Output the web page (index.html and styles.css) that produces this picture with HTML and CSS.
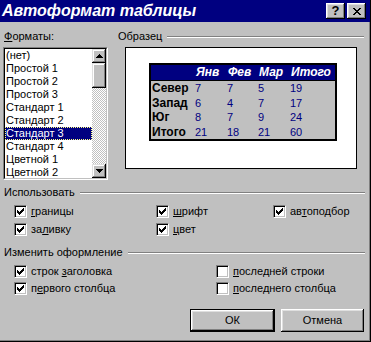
FILE: index.html
```html
<!DOCTYPE html>
<html lang="ru">
<head>
<meta charset="utf-8">
<title>Автоформат таблицы</title>
<link rel="stylesheet" href="styles.css">
</head>
<body>
<div class="win">
  <div class="titlebar">
    <span class="title">Автоформат таблицы</span>
    <div class="capbtns">
      <div class="capbtn help">?</div>
      <div class="capbtn">
        <svg width="8" height="7" viewBox="0 0 8 7" shape-rendering="crispEdges"><path d="M0 0h2v1H0zM6 0h2v1H6zM1 1h2v1H1zM5 1h2v1H5zM2 2h4v1H2zM3 3h2v1H3zM2 4h4v1H2zM1 5h2v1H1zM5 5h2v1H5zM0 6h2v1H0zM6 6h2v1H6z" fill="#000"/></svg>
      </div>
    </div>
  </div>
  <div class="body">
    <div class="top">
      <div class="formats">
        <div class="lbl"><u>Ф</u>орматы:</div>
        <div class="listbox">
          <div class="listin">
            <ul class="items">
              <li>(нет)</li>
              <li>Простой 1</li>
              <li>Простой 2</li>
              <li>Простой 3</li>
              <li>Стандарт 1</li>
              <li>Стандарт 2</li>
              <li class="sel">Стандарт 3</li>
              <li>Стандарт 4</li>
              <li>Цветной 1</li>
              <li>Цветной 2</li>
            </ul>
            <div class="vsb">
              <div class="sbtn"><svg width="7" height="4" viewBox="0 0 7 4" shape-rendering="crispEdges"><path d="M3 0h1v1H3zM2 1h3v1H2zM1 2h5v1H1zM0 3h7v1H0z" fill="#000"/></svg></div>
              <div class="thumb"></div>
              <div class="track"></div>
              <div class="sbtn"><svg width="7" height="4" viewBox="0 0 7 4" shape-rendering="crispEdges"><path d="M0 0h7v1H0zM1 1h5v1H1zM2 2h3v1H2zM3 3h1v1H3z" fill="#000"/></svg></div>
            </div>
          </div>
        </div>
      </div>
      <div class="sample">
        <div class="sep"><span>Образец</span><i class="line"></i></div>
        <div class="preview">
          <div class="tbl">
            <div class="hrow">
              <span></span><span>Янв</span><span>Фев</span><span>Мар</span><span>Итого</span>
            </div>
            <div class="row"><b>Север</b><span>7</span><span>7</span><span>5</span><span>19</span></div>
            <div class="row"><b>Запад</b><span>6</span><span>4</span><span>7</span><span>17</span></div>
            <div class="row"><b>Юг</b><span>8</span><span>7</span><span>9</span><span>24</span></div>
            <div class="row"><b>Итого</b><span>21</span><span>18</span><span>21</span><span>60</span></div>
          </div>
        </div>
      </div>
    </div>

    <div class="sep sep-use"><span>Использовать</span><i class="line"></i></div>
    <div class="checks3">
      <label class="cb"><span class="box on"></span><span><u>г</u>раницы</span></label>
      <label class="cb"><span class="box on"></span><span><u>ш</u>рифт</span></label>
      <label class="cb"><span class="box on"></span><span>ав<u>т</u>оподбор</span></label>
      <label class="cb"><span class="box on"></span><span>за<u>л</u>ивку</span></label>
      <label class="cb"><span class="box on"></span><span><u>ц</u>вет</span></label>
    </div>

    <div class="sep sep-mod"><span>Изменить оформление</span><i class="line"></i></div>
    <div class="checks2">
      <label class="cb"><span class="box on"></span><span>строк <u>з</u>аголовка</span></label>
      <label class="cb"><span class="box"></span><span><u>п</u>оследней строки</span></label>
      <label class="cb"><span class="box on"></span><span>п<u>е</u>рвого столбца</span></label>
      <label class="cb"><span class="box"></span><span><u>п</u>оследнего столбца</span></label>
    </div>

    <div class="buttons">
      <div class="btn default"><div class="btn-in">ОК</div></div>
      <div class="btn"><div class="btn-in">Отмена</div></div>
    </div>
  </div>
</div>
</body>
</html>
```

FILE: styles.css
```css
* { box-sizing: border-box; margin: 0; padding: 0; }
html, body { width: 371px; height: 342px; overflow: hidden; }
body {
  background: #c0c0c0;
  font: 11px/13px "Liberation Sans", Arial, sans-serif;
  color: #000;
}
u { text-decoration: underline; text-underline-offset: 1px; }

.win {
  width: 371px;
  height: 342px;
  display: flex;
  flex-direction: column;
  border-right: 1px solid #000;
  border-bottom: 1px solid #000;
  box-shadow: inset -1px -1px 0 #808080;
}

.titlebar {
  height: 22px;
  flex: none;
  background: #000080;
  display: flex;
  align-items: center;
  justify-content: space-between;
  padding: 0 4px 0 2px;
}
.title {
  color: #fff;
  font: italic bold 16px/22px "Liberation Sans", Arial, sans-serif;
  letter-spacing: 0;
  white-space: nowrap;
}
.capbtns { display: flex; gap: 2px; }
.capbtn {
  width: 19px;
  height: 16px;
  background: #c0c0c0;
  box-shadow: inset -1px -1px 0 #000, inset 1px 1px 0 #fff, inset -2px -2px 0 #808080, inset 2px 2px 0 #dfdfdf;
  display: flex;
  align-items: center;
  justify-content: center;
}
.capbtn.help { font: bold 13px/16px "Liberation Sans", Arial, sans-serif; }

.body {
  flex: 1;
  display: flex;
  flex-direction: column;
  padding: 8px 5px 9px 3px;
}

.top { display: flex; height: 150px; flex: none; }
.formats { width: 105px; flex: none; }
.lbl { padding-left: 1px; height: 13px; margin-bottom: 4px; }

.listbox {
  width: 105px;
  height: 133px;
  background: #fff;
  border: 1px solid;
  border-color: #808080 #fff #fff #808080;
}
.listin {
  height: 100%;
  display: flex;
  border: 1px solid;
  border-color: #000 #c0c0c0 #c0c0c0 #000;
}
.items { list-style: none; flex: 1; overflow: hidden; }
.items li { height: 13px; padding-left: 1px; white-space: nowrap; }
.items li.sel {
  background: #000080;
  color: #fff;
  outline: 1px dotted #ffff80;
  outline-offset: -1px;
}

.vsb { width: 14px; flex: none; display: flex; flex-direction: column; }
.sbtn, .thumb {
  background: #c0c0c0;
  box-shadow: inset -1px -1px 0 #000, inset 1px 1px 0 #dfdfdf, inset -2px -2px 0 #808080, inset 2px 2px 0 #fff;
}
.sbtn { height: 14px; flex: none; display: flex; align-items: center; justify-content: center; }
.thumb { height: 25px; flex: none; }
.track {
  flex: 1;
  background: repeating-conic-gradient(#fff 0 25%, #c0c0c0 0 50%) 0 0 / 2px 2px;
}

.sample { margin-left: 9px; width: 247px; flex: none; }

.sep { display: flex; align-items: center; height: 13px; flex: none; }
.sep span { padding-left: 1px; white-space: nowrap; }
.sep .line {
  flex: 1;
  height: 2px;
  margin-left: 5px;
  border-top: 1px solid #808080;
  border-bottom: 1px solid #fff;
}

.preview {
  margin: 4px 0 0 8px;
  width: 232px;
  height: 122px;
  background: #fff;
  border: 1px solid #000;
  padding: 15px 0 0 23px;
}

.tbl {
  width: 188px;
  border: 2px solid #000;
  background: #c0c0c0;
}
.hrow, .row {
  display: grid;
  grid-template-columns: 43px 32px 31px 32px 46px;
}
.hrow {
  height: 16px;
  background: #000080;
  border-bottom: 1px solid #000;
  color: #fff;
  font: italic bold 12px/15px "Liberation Sans", Arial, sans-serif;
}
.hrow span { padding-left: 2px; }
.row { height: 14.5px; line-height: 14.5px; color: #000080; font-size: 11px; }
.row span { padding-left: 1px; }
.row b { color: #000; font: bold 12px/14.5px "Liberation Sans", Arial, sans-serif; padding-left: 1px; }

.sep-use { margin-top: 6px; }
.checks3 {
  display: grid;
  grid-template-columns: 142px 117px auto;
  row-gap: 1px;
  padding-left: 11px;
  margin-top: 4px;
}
.sep-mod { margin-top: 8px; }
.checks2 {
  display: grid;
  grid-template-columns: 202px auto;
  padding-left: 11px;
  margin-top: 4px;
}

.cb { display: flex; align-items: center; gap: 4px; height: 17px; white-space: nowrap; }
.box {
  width: 13px;
  height: 13px;
  flex: none;
  background: #fff;
  border: 1px solid;
  border-color: #808080 #fff #fff #808080;
  box-shadow: inset 1px 1px 0 #000, inset -1px -1px 0 #c0c0c0;
  display: flex;
  align-items: center;
  justify-content: center;
}
.box.on::after {
  content: "";
  width: 7px;
  height: 7px;
  background:
    linear-gradient(#000, #000) 0 2px / 1px 3px no-repeat,
    linear-gradient(#000, #000) 1px 3px / 1px 3px no-repeat,
    linear-gradient(#000, #000) 2px 4px / 1px 3px no-repeat,
    linear-gradient(#000, #000) 3px 3px / 1px 3px no-repeat,
    linear-gradient(#000, #000) 4px 2px / 1px 3px no-repeat,
    linear-gradient(#000, #000) 5px 1px / 1px 3px no-repeat,
    linear-gradient(#000, #000) 6px 0 / 1px 3px no-repeat;
}

.buttons {
  margin-top: auto;
  display: flex;
  justify-content: flex-end;
  gap: 6px;
  padding-right: 1px;
}
.btn {
  width: 83px;
  height: 23px;
  background: #c0c0c0;
  box-shadow: inset -1px -1px 0 #000, inset 1px 1px 0 #fff, inset -2px -2px 0 #808080, inset 2px 2px 0 #dfdfdf;
}
.btn.default { width: 85px; border: 1px solid #000; }
.btn-in { height: 100%; display: flex; align-items: center; justify-content: center; }
```
